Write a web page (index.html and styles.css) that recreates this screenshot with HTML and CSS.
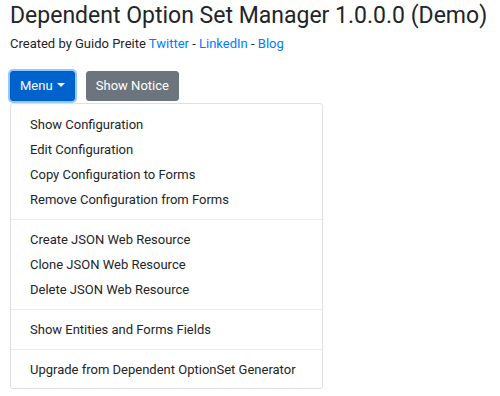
FILE: index.html
```html
<!DOCTYPE html>
<html lang="en">
<head>
    <meta charset="UTF-8">
    <meta name="viewport" content="width=device-width, initial-scale=1.0">
    <title>Dependent Option Set Manager</title>
    <link rel="stylesheet" href="styles.css">
</head>
<body>
    <div class="container">
        <h1>Dependent Option Set Manager 1.0.0.0 (Demo)</h1>
        <div class="credits">
            Created by Guido Preite <a href="#">Twitter</a> - <a href="#">LinkedIn</a> - <a href="#">Blog</a>
        </div>

        <div class="toolbar">
            <button class="btn btn-primary">Menu <span class="caret"></span></button>
            <button class="btn btn-secondary">Show Notice</button>
        </div>

        <div class="dropdown-menu">
            <a class="dropdown-item" href="#">Show Configuration</a>
            <a class="dropdown-item" href="#">Edit Configuration</a>
            <a class="dropdown-item" href="#">Copy Configuration to Forms</a>
            <a class="dropdown-item" href="#">Remove Configuration from Forms</a>
            <div class="dropdown-divider"></div>
            <a class="dropdown-item" href="#">Create JSON Web Resource</a>
            <a class="dropdown-item" href="#">Clone JSON Web Resource</a>
            <a class="dropdown-item" href="#">Delete JSON Web Resource</a>
            <div class="dropdown-divider"></div>
            <a class="dropdown-item" href="#">Show Entities and Forms Fields</a>
            <div class="dropdown-divider"></div>
            <a class="dropdown-item" href="#">Upgrade from Dependent OptionSet Generator</a>
        </div>
    </div>
</body>
</html>
```

FILE: styles.css
```css
body {
    font-family: Roboto, 'Noto Sans', sans-serif;
    background: #ffffff;
    color: #212529;
    margin: 0;
    padding: 0 10px;
}
.container {
    display: flex;
    flex-direction: column;
    align-items: flex-start;
}
h1 {
    font-size: 23px;
    font-weight: 400;
    line-height: 30px;
    margin: 1px 0 4px;
    white-space: nowrap;
    color: #212529;
}
.credits {
    font-size: 13px;
    line-height: 18px;
    color: #212529;
}
.credits a {
    color: #007bff;
    text-decoration: none;
}
.toolbar {
    display: flex;
    gap: 11px;
    margin-top: 18px;
}
.btn {
    font-family: inherit;
    font-size: 13px;
    line-height: 18px;
    padding: 5px 9px;
    border: 1px solid transparent;
    border-radius: 3px;
    color: #ffffff;
    cursor: pointer;
}
.btn-primary {
    background: #0062cc;
    border-color: #005cbf;
    box-shadow: 0 0 0 2px rgba(38, 143, 255, 0.5);
}
.btn-secondary {
    background: #6c757d;
    border-color: #6c757d;
}
.caret {
    display: inline-block;
    margin-left: 1px;
    vertical-align: 3px;
    border-top: 4px solid #ffffff;
    border-left: 4px solid transparent;
    border-right: 4px solid transparent;
}
.dropdown-menu {
    margin-top: 2px;
    width: 313px;
    box-sizing: border-box;
    border: 1px solid rgba(0, 0, 0, 0.12);
    border-radius: 3px;
    padding: 8px 0 6px;
    display: flex;
    flex-direction: column;
}
.dropdown-item {
    font-size: 13px;
    line-height: 19px;
    padding: 3px 19px;
    color: #212529;
    text-decoration: none;
    white-space: nowrap;
}
.dropdown-divider {
    height: 0;
    margin: 7px 0;
    border-top: 1px solid #e9ecef;
}
```
